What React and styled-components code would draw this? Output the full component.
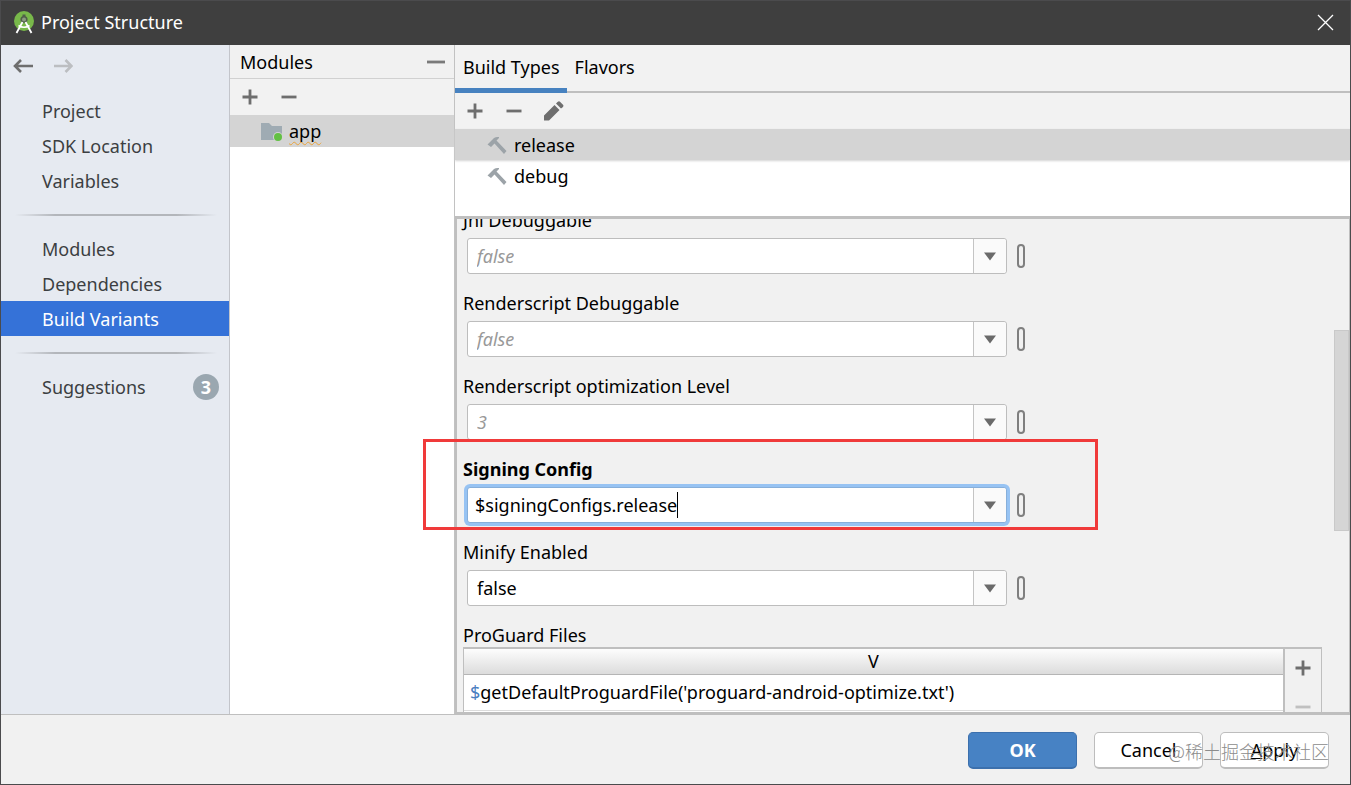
import React, { useState } from "react";
import styled, { createGlobalStyle, css } from "styled-components";

const GlobalStyle = createGlobalStyle`
  * {
    box-sizing: border-box;
  }

  body {
    margin: 0;
    background: #f1f1f1;
  }

  body, button, input {
    font-family: "Noto Sans", "Noto Sans CJK SC", sans-serif;
    font-size: 18px;
    line-height: 24px;
    color: #000;
  }

  button {
    padding: 0;
    border: 0;
    background: none;
    cursor: pointer;
  }

  svg {
    display: block;
  }
`;

const Window = styled.div`
  position: relative;
  display: flex;
  flex-direction: column;
  height: 100vh;
  border: 1px solid #4b4b4d;
  background: #f1f1f1;
  overflow: hidden;
`;

const TitleBar = styled.header`
  display: flex;
  align-items: center;
  flex: none;
  height: 44px;
  padding: 0 16px 2px 12px;
  background: #3f3f3f;

  h1 {
    flex: 1;
    margin: 0 0 0 6px;
    font-size: 18px;
    font-weight: normal;
    color: #fff;
  }
`;

const Body = styled.div`
  display: flex;
  flex: 1;
  min-height: 0;
`;

const Sidebar = styled.aside`
  flex: none;
  width: 229px;
  border-right: 1px solid #c3c5cb;
  background: #e6eaf1;
`;

const History = styled.div`
  display: flex;
  gap: 20px;
  padding: 11px 12px 17px;
`;

const NavItem = styled.a`
  display: flex;
  align-items: center;
  justify-content: space-between;
  height: 35px;
  padding: 0 10px 0 41px;
  color: ${(props) => (props.$active ? "#fff" : "#3c3f42")};
  background: ${(props) => (props.$active ? "#3572d8" : "transparent")};
  text-decoration: none;
`;

const Divider = styled.hr`
  height: 2px;
  margin: 16px 12px 15px 14px;
  border: 0;
  background: linear-gradient(to right, transparent, #b3b6bb 20%, #b3b6bb 80%, transparent);
`;

const Badge = styled.span`
  width: 26px;
  height: 26px;
  border-radius: 50%;
  background: #9aa7b0;
  color: #fff;
  font-weight: bold;
  line-height: 26px;
  text-align: center;
`;

const ModulesPanel = styled.section`
  display: flex;
  flex-direction: column;
  flex: none;
  width: 225px;
  border-right: 1px solid #c2c2c2;
  background: #fff;
`;

const PanelHeader = styled.div`
  display: flex;
  align-items: center;
  justify-content: space-between;
  height: 34px;
  padding: 0 8px 0 10px;
  border-bottom: 1px solid #d1d1d1;
  background: #f1f1f1;

  h2 {
    margin: 0;
    font-size: 18px;
    font-weight: normal;
  }
`;

const Toolbar = styled.div`
  display: flex;
  align-items: center;
  flex: none;
  gap: 19px;
  height: 36px;
  padding: 0 10px;
  background: #f2f2f2;
`;

const ListRow = styled.div`
  display: flex;
  align-items: center;
  flex: none;
  gap: 7px;
  height: ${(props) => (props.$tall ? 32 : 31)}px;
  padding-left: ${(props) => (props.$tall ? 31 : 32)}px;
  ${(props) =>
    props.$selected &&
    css`
      background: #d4d4d4;
      box-shadow: ${props.$tall ? "none" : "0 1px 2px #d4d4d4"};
    `}
`;

const Warned = styled.span`
  text-decoration: underline wavy #e8a33d 1px;
  text-underline-offset: 3px;
  text-decoration-skip-ink: none;
`;

const Main = styled.main`
  display: flex;
  flex-direction: column;
  flex: 1;
  min-width: 0;
`;

const Tabs = styled.div`
  display: flex;
  flex: none;
  height: 48px;
  background: #f2f2f2;
  box-shadow: inset 0 -2px #bfbfbf;
`;

const Tab = styled.button`
  padding: 0 7px 0 8px;
  border-bottom: 5px solid ${(props) => (props.$active ? "#4782c0" : "transparent")};
`;

const BuildTypeList = styled.div`
  flex: none;
  height: 87px;
  background: #fff;
`;

const ScrollPane = styled.div`
  position: relative;
  flex: 1;
  min-height: 0;
  border: solid #bfbfbf;
  border-width: 3px 1px 2px 2px;
  overflow: hidden;
`;

const ScrollThumb = styled.div`
  position: absolute;
  top: 111px;
  right: 0;
  width: 15px;
  height: 201px;
  border: 1px solid #c9c9c9;
  background: #d5d5d5;
`;

const Properties = styled.form`
  margin-top: -11px;
  padding: 0 27px 0 6px;
`;

const FieldBlock = styled.div`
  height: 83px;

  label {
    display: block;
    height: 30px;
    font-weight: ${(props) => (props.$bold ? "bold" : "normal")};
  }
`;

const FieldRow = styled.div`
  display: flex;
  align-items: center;
  gap: 10px;
  padding-left: 4px;
`;

const Combo = styled.div`
  display: flex;
  width: 540px;
  height: 36px;
  border: 1px solid #bdbdbd;
  border-radius: 3px;
  background: #fff;
  ${(props) =>
    props.$focused &&
    css`
      border-color: #87afda;
      box-shadow: 0 0 0 3px #97c3f3;
    `}
`;

const ComboText = styled.div`
  display: flex;
  align-items: center;
  flex: 1;
  min-width: 0;
  padding-left: ${(props) => (props.$focused ? 7 : 9)}px;

  input {
    field-sizing: content;
    padding: 0;
    border: 0;
    outline: 0;
    background: none;
  }

  input::placeholder {
    color: #999;
    font-style: italic;
    opacity: 1;
  }
`;

const Caret = styled.span`
  width: 1px;
  height: 26px;
  background: #000;
`;

const ComboButton = styled.button`
  display: flex;
  align-items: center;
  justify-content: center;
  width: 33px;
  border-left: 1px solid #c4c4c4;
  border-radius: 0 3px 3px 0;
  background: #fafafa;
`;

const BindButton = styled.button`
  width: 8px;
  height: 24px;
  border: 2px solid #7f7f7f;
  border-radius: 4px;
`;

const FilesLabel = styled.div`
  height: 24px;
`;

const FilesPanel = styled.div`
  display: flex;
  border: 1px solid #bfbfbf;
  border-top-width: 2px;
`;

const FilesTable = styled.table`
  flex: 1;
  border-collapse: collapse;
  background: #fff;

  th {
    height: 25px;
    padding: 0;
    border-bottom: 1px solid #b5b5b5;
    background: linear-gradient(#fdfdfd, #dcdcdc);
    font-weight: normal;
  }

  td {
    height: 36px;
    padding: 0 6px;
    border-bottom: 1px solid #dcdcdc;
  }

  td span {
    color: #4a7ebf;
  }
`;

const FilesTools = styled.div`
  display: flex;
  flex-direction: column;
  align-items: center;
  gap: 19px;
  width: 38px;
  height: 90px;
  padding-top: 9px;
  border-left: 2px solid #bfbfbf;
`;

const Footer = styled.footer`
  display: flex;
  justify-content: flex-end;
  flex: none;
  gap: 17px;
  height: 70px;
  padding: 17px 21px 0;
  border-top: 1px solid #bfbfbf;
`;

const DialogButton = styled.button`
  width: 109px;
  height: 37px;
  border: 1px solid ${(props) => (props.$primary ? "#3c70ad" : "#bdbdbd")};
  border-bottom-width: 2px;
  border-radius: 5px;
  background: ${(props) => (props.$primary ? "#4782c4" : "#fff")};
  color: ${(props) => (props.$primary ? "#fff" : "#000")};
  font-weight: ${(props) => (props.$primary ? "bold" : "normal")};
`;

const Highlight = styled.div`
  position: absolute;
  top: 438px;
  left: 422px;
  width: 675px;
  height: 91px;
  border: 3px solid #f03a3a;
  pointer-events: none;
`;

const Watermark = styled.div`
  position: absolute;
  right: 21px;
  bottom: 21px;
  color: #8c8c8c;
  font-family: "Noto Sans CJK SC", sans-serif;
  font-weight: 300;
  pointer-events: none;
`;

const StudioLogo = () => (
  <svg width="22" height="24" viewBox="0 0 22 24" aria-hidden="true">
    <circle cx="11" cy="11" r="10" fill="#78b84a" />
    <path d="M11 4.500v3" stroke="#4f5f48" strokeWidth="3" />
    <circle cx="11" cy="9.500" r="2.800" fill="#8a9a80" stroke="#4f5f48" strokeWidth="1.600" />
    <path d="M9.500 12 3.500 23M12.500 12l6 11" stroke="#fff" strokeWidth="1.800" />
    <path d="M5.500 15.500q5.500 3.500 11 0" fill="none" stroke="#fff" strokeWidth="1.600" />
  </svg>
);

const CloseIcon = () => (
  <svg width="17" height="17" viewBox="0 0 17 17" aria-hidden="true">
    <path d="m1 1 15 15M16 1 1 16" stroke="#fff" strokeWidth="1.300" />
  </svg>
);

const ArrowIcon = ({ forward }) => (
  <svg width="20" height="20" viewBox="0 0 20 20" aria-hidden="true">
    <path
      d={forward ? "M1 10h18M12.500 4l6 6-6 6" : "M20 10H2M8 4l-6 6 6 6"}
      fill="none"
      stroke={forward ? "#bcbec1" : "#6e6e6e"}
      strokeWidth="2.600"
    />
  </svg>
);

const PlusIcon = () => (
  <svg width="20" height="20" viewBox="0 0 20 20" aria-hidden="true">
    <path d="M2.500 10h15M10 2.500v15" stroke="#6e6e6e" strokeWidth="2.800" />
  </svg>
);

const MinusIcon = ({ color = "#6e6e6e", width = 15 }) => (
  <svg width="20" height="20" viewBox="0 0 20 20" aria-hidden="true">
    <path d={`M${10 - width / 2} 10h${width}`} stroke={color} strokeWidth="2.800" />
  </svg>
);

const PencilIcon = () => (
  <svg width="22" height="20" viewBox="0 0 22 20" aria-hidden="true">
    <path d="M1 19.500v-5L11.500 4l5 5L6 19.500zM13 2.500 14.500 1q1.500-1.200 2.500-.3l3 3q1 1-.3 2.500L18 7.500z" fill="#6e6e6e" />
  </svg>
);

const FolderIcon = () => (
  <svg width="21" height="20" viewBox="0 0 21 20" aria-hidden="true">
    <path d="M0 2h8l3 3h10v14H0z" fill="#9fabb3" />
    <circle cx="17" cy="16" r="5" fill="#d4d4d4" />
    <circle cx="17" cy="16" r="4" fill="#62c043" />
  </svg>
);

const HammerIcon = () => (
  <svg width="20" height="20" viewBox="0 0 20 20" aria-hidden="true">
    <path d="M.5 9.500 7 3Q9 1.500 12 2v1L9.500 5.500 19.500 16 17 19 7.500 8.500 4 12z" fill="#9ca3a8" />
  </svg>
);

const DropIcon = () => (
  <svg width="14" height="9" viewBox="0 0 14 9" aria-hidden="true">
    <path d="M1 .5h12L7 8.500z" fill="#6a6a6a" />
  </svg>
);

const fields = [
  { id: "jniDebuggable", label: "Jni Debuggable", placeholder: "false" },
  { id: "rsDebuggable", label: "Renderscript Debuggable", placeholder: "false" },
  { id: "rsLevel", label: "Renderscript optimization Level", placeholder: "3" },
  { id: "signingConfig", label: "Signing Config", focused: true },
  { id: "minify", label: "Minify Enabled" },
];

const Field = ({ field, value, onChange }) => (
  <FieldBlock $bold={field.focused}>
    <label htmlFor={field.id}>{field.label}</label>
    <FieldRow>
      <Combo $focused={field.focused}>
        <ComboText $focused={field.focused}>
          <input
            id={field.id}
            name={field.id}
            value={value}
            placeholder={field.placeholder}
            onChange={onChange}
          />
          {field.focused && <Caret />}
        </ComboText>
        <ComboButton type="button" aria-label={`${field.label} options`}>
          <DropIcon />
        </ComboButton>
      </Combo>
      <BindButton type="button" aria-label={`Bind ${field.label}`} />
    </FieldRow>
  </FieldBlock>
);

const pages = [
  ["Project", "SDK Location", "Variables"],
  ["Modules", "Dependencies", "Build Variants"],
];

const App = () => {
  const [page, setPage] = useState("Build Variants");
  const [tab, setTab] = useState("Build Types");
  const [values, setValues] = useState({
    jniDebuggable: "",
    rsDebuggable: "",
    rsLevel: "",
    signingConfig: "$signingConfigs.release",
    minify: "false",
  });

  const handleInputValue = (event) => {
    setValues({ ...values, [event.target.name]: event.target.value });
  };

  return (
    <>
      <GlobalStyle />
      <Window>
        <TitleBar>
          <StudioLogo />
          <h1>Project Structure</h1>
          <button aria-label="Close">
            <CloseIcon />
          </button>
        </TitleBar>
        <Body>
          <Sidebar>
            <History>
              <button aria-label="Back">
                <ArrowIcon />
              </button>
              <button aria-label="Forward" disabled>
                <ArrowIcon forward />
              </button>
            </History>
            <nav>
              {pages.map((group) => (
                <React.Fragment key={group[0]}>
                  {group.map((name) => (
                    <NavItem key={name} href="#" $active={page === name} onClick={() => setPage(name)}>
                      {name}
                    </NavItem>
                  ))}
                  <Divider />
                </React.Fragment>
              ))}
              <NavItem href="#" $active={page === "Suggestions"} onClick={() => setPage("Suggestions")}>
                Suggestions <Badge>3</Badge>
              </NavItem>
            </nav>
          </Sidebar>

          <ModulesPanel>
            <PanelHeader>
              <h2>Modules</h2>
              <button aria-label="Hide modules">
                <MinusIcon width={18} color="#7a7a7a" />
              </button>
            </PanelHeader>
            <Toolbar>
              <button aria-label="Add module">
                <PlusIcon />
              </button>
              <button aria-label="Remove module">
                <MinusIcon />
              </button>
            </Toolbar>
            <ListRow $tall $selected>
              <FolderIcon />
              <Warned>app</Warned>
            </ListRow>
          </ModulesPanel>

          <Main>
            <Tabs>
              {["Build Types", "Flavors"].map((name) => (
                <Tab key={name} $active={tab === name} onClick={() => setTab(name)}>
                  {name}
                </Tab>
              ))}
            </Tabs>
            <Toolbar>
              <button aria-label="Add build type">
                <PlusIcon />
              </button>
              <button aria-label="Remove build type">
                <MinusIcon />
              </button>
              <button aria-label="Rename build type">
                <PencilIcon />
              </button>
            </Toolbar>
            <BuildTypeList>
              <ListRow $selected>
                <HammerIcon />
                release
              </ListRow>
              <ListRow>
                <HammerIcon />
                debug
              </ListRow>
            </BuildTypeList>
            <ScrollPane>
              <Properties>
                {fields.map((field) => (
                  <Field key={field.id} field={field} value={values[field.id]} onChange={handleInputValue} />
                ))}
                <FilesLabel id="proguardFiles">ProGuard Files</FilesLabel>
                <FilesPanel>
                  <FilesTable aria-labelledby="proguardFiles">
                    <thead>
                      <tr>
                        <th>V</th>
                      </tr>
                    </thead>
                    <tbody>
                      <tr>
                        <td>
                          <span>$</span>getDefaultProguardFile('proguard-android-optimize.txt')
                        </td>
                      </tr>
                      <tr>
                        <td />
                      </tr>
                    </tbody>
                  </FilesTable>
                  <FilesTools>
                    <button type="button" aria-label="Add file">
                      <PlusIcon />
                    </button>
                    <button type="button" aria-label="Remove file" disabled>
                      <MinusIcon color="#c0c0c0" />
                    </button>
                  </FilesTools>
                </FilesPanel>
              </Properties>
              <ScrollThumb />
            </ScrollPane>
          </Main>
        </Body>
        <Footer>
          <DialogButton $primary>OK</DialogButton>
          <DialogButton>Cancel</DialogButton>
          <DialogButton>
            <u>A</u>pply
          </DialogButton>
        </Footer>
        <Highlight />
        <Watermark>@稀土掘金技术社区</Watermark>
      </Window>
    </>
  );
};

export default App;
